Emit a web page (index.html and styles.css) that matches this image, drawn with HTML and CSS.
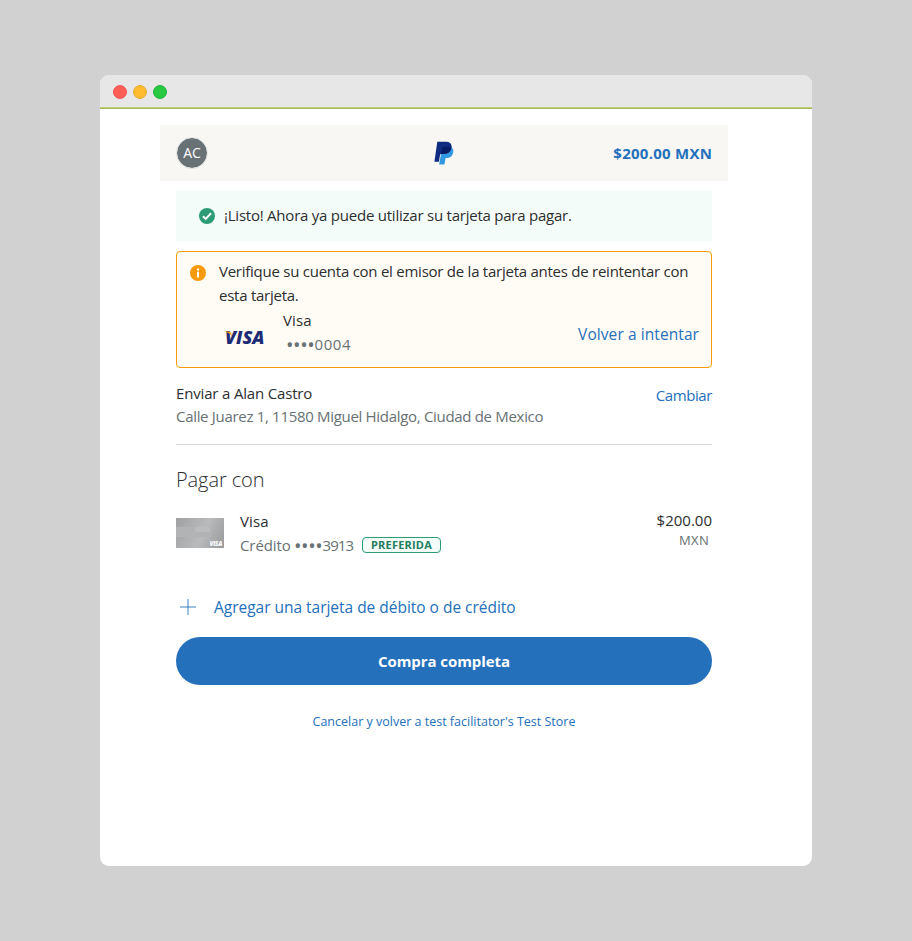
FILE: index.html
```
<!DOCTYPE html>
<html lang="es">
<head>
<meta charset="utf-8">
<title>PayPal</title>
<link rel="stylesheet" href="styles.css">
</head>
<body>
<div class="window">
  <div class="titlebar"><i class="dot red"></i><i class="dot yellow"></i><i class="dot green"></i></div>
  <div class="page">
    <header class="header">
      <div class="avatar">AC</div>
      <svg class="logo" viewBox="0 0 20 24">
        <path fill="#3299e1" d="M17.2 6.2C19 7.3 19.700 9 19.200 11.500C18.400 15.300 16 17 12.500 17H11.600L10.400 23.400H5.200L5.600 20.500L8.300 6.200Z"/>
        <path fill="#0f2c81" d="M3.300 0.700H11.200C15.700 0.700 18.100 2.700 17.500 6.300C16.800 10.800 14 12.900 9.600 12.900H7C6.500 12.900 6.200 13.200 6.100 13.700L4.900 20.700H0.400Z"/>
        <path fill="#061c64" d="M8.400 5.800H17.500C17 10.800 14 12.900 9.600 12.900H7.200Z"/>
      </svg>
      <div class="total">$200.00 MXN</div>
    </header>
    <main class="content">
      <section class="success">
        <svg class="status" viewBox="0 0 16 16"><circle cx="8" cy="8" r="8" fill="#2c9b76"/><path d="M3.900 8.200L6.700 10.900L12 5.300" fill="none" stroke="#fff" stroke-width="2"/></svg>
        <span class="success-text">¡Listo! Ahora ya puede utilizar su tarjeta para pagar.</span>
      </section>
      <section class="warning">
        <svg class="status" viewBox="0 0 16 16"><circle cx="8" cy="8" r="8" fill="#f79a0c"/><path fill="#fff" d="M7 3.500h2v2H7zM7 6.800h2v5.700H7z"/></svg>
        <div class="warning-body">
          <p class="warning-text">Verifique su cuenta con el emisor de la tarjeta antes de reintentar con esta tarjeta.</p>
          <div class="retry">
            <div class="visa"><span class="visa-mark">VISA</span><svg class="visa-wing" viewBox="0 0 10 6"><path fill="#f7a11a" d="M0 0.500H4.800C6.400 0.500 7 1.200 7.300 2.500L8 5.500C6.500 3 4 1.200 0 0.500Z"/></svg></div>
            <div class="card-info"><span class="name">Visa</span><span class="digits"><b class="bullets">••••</b>0004</span></div>
            <a class="retry-link">Volver a intentar</a>
          </div>
        </div>
      </section>
      <section class="shipping">
        <div><div class="recipient">Enviar a Alan Castro</div><div class="address">Calle Juarez 1, 11580 Miguel Hidalgo, Ciudad de Mexico</div></div>
        <a class="change">Cambiar</a>
      </section>
      <h1 class="heading">Pagar con</h1>
      <section class="method">
        <div class="card-art"><span>VISA</span></div>
        <div class="method-info">
          <span class="name">Visa</span>
          <div class="credit"><span class="credit-label">Crédito</span><span class="credit-digits"><b class="bullets">••••</b>3913</span><span class="badge">PREFERIDA</span></div>
        </div>
        <div class="amount"><span>$200.00</span><small>MXN</small></div>
      </section>
      <a class="add"><svg class="plus" viewBox="0 0 16 16"><path d="M8 0V16M0 8H16" stroke="#2470bb" stroke-width=".9"/></svg><span>Agregar una tarjeta de débito o de crédito</span></a>
      <button class="submit">Compra completa</button>
      <a class="cancel">Cancelar y volver a test facilitator's Test Store</a>
    </main>
  </div>
</div>
</body>
</html>
```
FILE: styles.css
```
* { box-sizing: border-box; }
body { margin: 0; padding: 75px 100px; height: 941px; background: #d1d1d1; color: #2c2e2f; font: 15px/24px "Open Sans", sans-serif; }
.window { height: 791px; background: #fff; border-radius: 9px; overflow: hidden; }
.titlebar { height: 34px; padding: 10px 13px; display: flex; gap: 6px; background: linear-gradient(#bad075 0 0) bottom 1px left 0 / 100% 1px no-repeat, linear-gradient(#aab95b 0 0) bottom left / 100% 1px no-repeat, #e7e7e7; }
.dot { width: 14px; height: 14px; border-radius: 50%; border: 1px solid; }
.red { background: #ff5f57; border-color: #ee554f; }
.yellow { background: #febc2e; border-color: #e9ab38; }
.green { background: #28c840; border-color: #20b238; }
.page { margin: 16px 84px 0 60px; }
.header { height: 56px; padding: 0 16px; display: grid; grid-template-columns: 1fr 20px 1fr; align-items: center; background: #f8f7f3; }
.avatar { width: 32px; height: 32px; border-radius: 50%; border: 1px solid #dfe1e1; background: #687173; background-clip: padding-box; color: #fff; font-size: 14px; line-height: 30px; text-align: center; letter-spacing: -.1px; }
.logo { width: 20px; height: 24px; }
.total { justify-self: end; color: #2470bb; font-weight: 700; letter-spacing: .27px; margin-right: -.27px; margin-top: -1px; }
.content { padding: 10px 16px 0; }
.success { height: 50px; padding-left: 23px; display: flex; align-items: center; background: #f4fcfa; }
.status { width: 16px; height: 16px; flex: none; }
.success-text { margin: -2px 0 0 9px; letter-spacing: -.23px; }
.warning { height: 117px; margin-top: 10px; padding: 7px 12px 0 13px; display: flex; border: 1px solid #f79a0c; border-radius: 4px; background: #fffcf5; }
.warning .status { margin-top: 6px; }
.warning-body { flex: 1; margin-left: 13px; }
.warning-text { margin: 0; letter-spacing: -.25px; }
.retry { display: flex; margin-top: 1px; }
.visa { position: relative; width: 64px; padding: 15px 0 0 6px; }
.visa-mark { display: block; width: max-content; color: #1c2b74; font: italic 800 18px/28px "Open Sans", sans-serif; letter-spacing: 0; }
.visa-wing { position: absolute; left: 5px; top: 23px; width: 10px; height: 6px; }
.card-info { display: flex; flex-direction: column; }
.name { letter-spacing: .15px; }
.digits { color: #687173; padding-left: 3px; letter-spacing: .6px; }
.bullets { font-weight: 400; font-size: 20px; line-height: 1px; letter-spacing: -.4px; vertical-align: -2px; }
.retry-link { margin: 14px 0 0 auto; font-size: 15.5px; line-height: 24px; letter-spacing: .08px; color: #2470bb; }
.shipping { height: 77px; padding-top: 13px; display: flex; justify-content: space-between; border-bottom: 1px solid #d8dadb; line-height: 23px; }
.recipient { letter-spacing: -.17px; padding-top: 1px; }
.address { color: #687173; letter-spacing: -.31px; }
.change { color: #2470bb; letter-spacing: -.4px; padding-top: 3px; }
.heading { margin: 22px 0 0; font-size: 20px; line-height: 26px; font-weight: 300; letter-spacing: -.1px; }
.method { display: flex; margin-top: 16px; height: 49px; }
.card-art { width: 48px; height: 30px; margin: 9px 16px 0 0; padding: 22px 2px 0 0; text-align: right; background: linear-gradient(#bcbcbe 0 0) 19px 9px / 15px 5px no-repeat, linear-gradient(#b2b3b5 0 0) 0 9px / 35px 10px no-repeat, linear-gradient(115deg, #a0a1a3, #b9babc 55%, #98999b); color: #fff; font: italic 800 6px/8px "Open Sans", sans-serif; }
.card-art span { display: block; letter-spacing: -.2px; }
.method-info { display: flex; flex-direction: column; }
.credit { display: flex; align-items: center; height: 24px; color: #687173; }
.credit-label { width: 54px; letter-spacing: -.1px; }
.credit-digits { width: 59px; letter-spacing: -.9px; }
.badge { margin-left: 9px; width: 79px; height: 16px; border: 1px solid #2c9b76; border-radius: 4px; background: #f4fcfa; color: #1f7f5f; font-size: 11px; line-height: 14px; font-weight: 700; letter-spacing: .2px; text-align: center; }
.amount { margin-left: auto; display: flex; flex-direction: column; align-items: flex-end; line-height: 22px; }
.amount small { color: #687173; font-size: 13px; line-height: 18px; letter-spacing: .3px; padding-right: 3px; }
.add { display: flex; align-items: center; height: 24px; margin-top: 37px; padding-left: 4px; color: #2470bb; font-size: 15.5px; letter-spacing: -.02px; }
.plus { width: 16px; height: 16px; margin-right: 18px; }
.submit { display: block; width: 100%; height: 48px; margin-top: 18px; padding: 0; border: 0; border-radius: 24px; background: #2470bb; color: #fff; font: 700 15px/48px "Open Sans", sans-serif; letter-spacing: -.07px; }
.cancel { display: block; margin-top: 25px; text-align: center; color: #2470bb; font-size: 12.5px; }
```
